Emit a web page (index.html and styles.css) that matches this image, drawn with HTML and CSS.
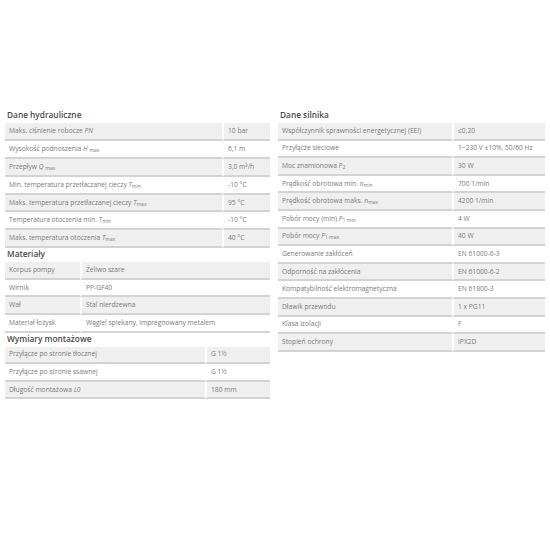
FILE: index.html
```html
<!DOCTYPE html>
<html lang="pl">
<head>
<meta charset="utf-8">
<title>Dane techniczne</title>
<link rel="stylesheet" href="styles.css">
</head>
<body>
<div class="page">
  <div class="col col-left">
    <h3 class="title">Dane hydrauliczne</h3>
    <table class="spec spec-hyd">
      <tr><td>Maks. ciśnienie robocze <i>PN</i></td><td>10 bar</td></tr>
      <tr><td>Wysokość podnoszenia <i>H</i> <sub>max</sub></td><td>6,1 m</td></tr>
      <tr><td>Przepływ <i>Q</i> <sub>max</sub></td><td>3,0 m³/h</td></tr>
      <tr><td>Min. temperatura przetłaczanej cieczy <i>T</i><sub>min</sub></td><td>-10 °C</td></tr>
      <tr><td>Maks. temperatura przetłaczanej cieczy <i>T</i><sub>max</sub></td><td>95 °C</td></tr>
      <tr><td>Temperatura otoczenia min. <i>T</i><sub>min</sub></td><td>-10 °C</td></tr>
      <tr><td>Maks. temperatura otoczenia <i>T</i><sub>max</sub></td><td>40 °C</td></tr>
    </table>
    <h3 class="title">Materiały</h3>
    <table class="spec spec-mat">
      <tr><td>Korpus pompy</td><td>Żeliwo szare</td></tr>
      <tr><td>Wirnik</td><td>PP-GF40</td></tr>
      <tr><td>Wał</td><td>Stal nierdzewna</td></tr>
      <tr><td>Materiał łożysk</td><td>Węgiel spiekany, impregnowany metalem</td></tr>
    </table>
    <h3 class="title">Wymiary montażowe</h3>
    <table class="spec spec-dim">
      <tr><td>Przyłącze po stronie tłocznej</td><td>G 1½</td></tr>
      <tr><td>Przyłącze po stronie ssawnej</td><td>G 1½</td></tr>
      <tr><td>Długość montażowa <i>L0</i></td><td>180 mm</td></tr>
    </table>
  </div>
  <div class="col col-right">
    <h3 class="title">Dane silnika</h3>
    <table class="spec spec-mot">
      <tr><td>Współczynnik sprawności energetycznej (EEI)</td><td>≤0,20</td></tr>
      <tr><td>Przyłącze sieciowe</td><td>1~230 V ±10%, 50/60 Hz</td></tr>
      <tr><td>Moc znamionowa <i>P</i><sub>2</sub></td><td>30 W</td></tr>
      <tr><td>Prędkość obrotowa min. <i>n</i><sub>min</sub></td><td>700 1/min</td></tr>
      <tr><td>Prędkość obrotowa maks. <i>n</i><sub>max</sub></td><td>4200 1/min</td></tr>
      <tr><td>Pobór mocy (min) <i>P</i><sub>1 min</sub></td><td>4 W</td></tr>
      <tr><td>Pobór mocy <i>P</i><sub>1 max</sub></td><td>40 W</td></tr>
      <tr><td>Generowanie zakłóceń</td><td>EN 61000-6-3</td></tr>
      <tr><td>Odporność na zakłócenia</td><td>EN 61000-6-2</td></tr>
      <tr><td>Kompatybilność elektromagnetyczna</td><td>EN 61800-3</td></tr>
      <tr><td>Dławik przewodu</td><td>1 x PG11</td></tr>
      <tr><td>Klasa izolacji</td><td>F</td></tr>
      <tr><td>Stopień ochrony</td><td>IPX2D</td></tr>
    </table>
  </div>
</div>
</body>
</html>
```
FILE: styles.css
```css
html, body {
  margin: 0;
  padding: 0;
  background: #ffffff;
}
body {
  font-family: "Open Sans", "Liberation Sans", sans-serif;
  color: #7a7a7a;
}
.page {
  display: flex;
  gap: 8px;
  padding: 108px 5px 0 5px;
}
.col-left {
  width: 265px;
}
.col-right {
  width: 267px;
}
.title {
  margin: 0 0 2px 0;
  padding: 0 0 0 2px;
  font-size: 8.3px;
  line-height: 13px;
  font-weight: 600;
  color: #4a4a4a;
}
.spec + .title {
  margin-top: -1px;
}
.spec {
  width: 100%;
  border-collapse: separate;
  border-spacing: 0;
  font-size: 6.7px;
  margin-bottom: 0;
}
.spec td {
  height: 15.6px;
  padding: 0 4px;
  border-bottom: 2px solid #d3d3d3;
  vertical-align: middle;
  white-space: nowrap;
  line-height: 10px;
}
.spec-hyd td { height: 15.9px; }
.spec td + td {
  border-left: 2px solid #ffffff;
}
.spec tr:nth-child(odd) td {
  background: #efefef;
}
.spec i {
  font-style: italic;
}
.spec sub {
  font-size: 5px;
  vertical-align: -1px;
  line-height: 0;
}
.spec-hyd td:first-child { width: 209px; }
.spec-mat td:first-child { width: 67px; }
.spec-dim td:first-child { width: 192px; }
.spec-mot td:first-child { width: 166px; }
```
